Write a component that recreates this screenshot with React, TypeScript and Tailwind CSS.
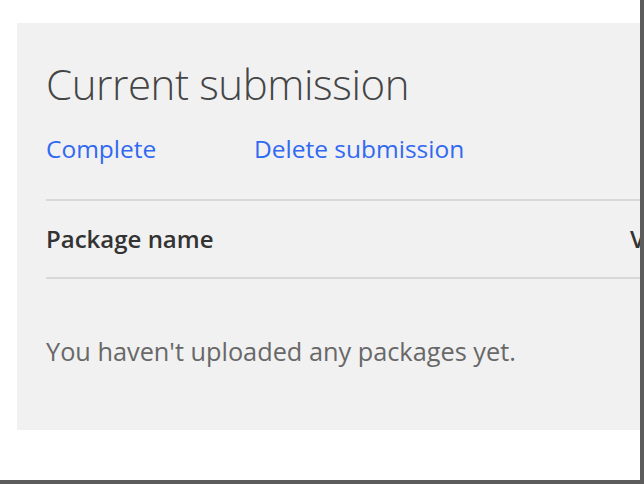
export default function App() {
  return (
    <div className="w-[644px] h-[484px] bg-white" style={{ fontFamily: '"Open Sans", "Noto Sans", sans-serif' }}>
      <div className="w-[644px] h-[484px] border-r-[4px] border-b-[4px] border-[#5c5c5c] pt-[23px] pl-[17px] overflow-hidden">
        {/* submission panel */}
        <div className="h-[407px] bg-[#f1f1f1] pl-[29px] pt-[40px] overflow-hidden">
          <h1 className="text-[42px] leading-none font-light text-[#454545] tracking-[-0.4px] whitespace-nowrap">
            Current submission
          </h1>
          <div className="flex mt-[32px] text-[24.5px] leading-none text-[#3169f2] whitespace-nowrap">
            <a className="w-[208px] shrink-0">Complete</a>
            <a>Delete submission</a>
          </div>
          <div className="mt-[37px] border-t-2 border-[#d8d8d8] w-[640px]" />
          <div className="flex h-[76px] items-center text-[24px] font-semibold text-[#333] whitespace-nowrap">
            <span className="w-[584px] shrink-0">Package name</span>
            <span>Version</span>
          </div>
          <div className="border-t-2 border-[#d8d8d8] w-[640px]" />
          <p className="mt-[60px] text-[25.3px] leading-none text-[#686868] whitespace-nowrap">
            You haven't uploaded any packages yet.
          </p>
        </div>
      </div>
    </div>
  )
}
